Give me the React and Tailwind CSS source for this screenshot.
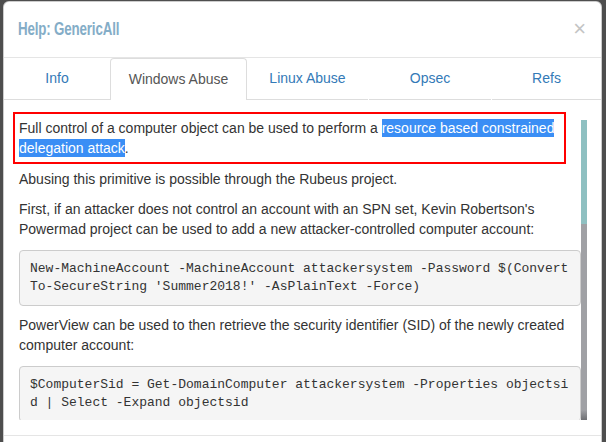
export default function App() {
  const tabInactive =
    "h-full flex items-center justify-center border-b border-[#dddddd] text-[#337ab7]";
  return (
    <div className="w-[606px] h-[442px] overflow-hidden bg-[#4e4e4e] pl-[3px] pt-[1px] font-['Liberation_Sans',Arial,sans-serif] text-[14px] text-[#333333]">
      <div className="w-[599px] h-[470px] bg-white rounded-[6px] border border-black/20 flex flex-col">
        {/* header */}
        <div className="h-[56px] shrink-0 border-b border-[#e5e5e5] flex items-center justify-between pl-[14px] pr-[14px]">
          <div className="inline-block origin-left scale-x-[0.74] text-[18px] font-bold text-[#84adc7] font-['Liberation_Sans',sans-serif] tracking-[-0.2px]">
            Help: GenericAll
          </div>
          <div className="text-[22px] font-normal leading-none text-[#c4c4c4] pb-[2px] pr-[1px]">×</div>
        </div>
        {/* tabs */}
        <div className="h-[42px] shrink-0 flex">
          <div className={`w-[106px] ${tabInactive}`}>Info</div>
          <div className="w-[137px] h-full flex items-center justify-center border border-[#dddddd] border-b-0 rounded-t-[4px] text-[#555555] bg-white">
            Windows Abuse
          </div>
          <div className={`w-[121px] ${tabInactive}`}>Linux Abuse</div>
          <div className="w-[1px] h-full" />
          <div className={`w-[122px] ${tabInactive}`}>Opsec</div>
          <div className="w-[1px] h-full" />
          <div className={`flex-1 ${tabInactive}`}>Refs</div>
        </div>
        {/* body */}
        <div className="flex shrink-0 h-[320px]">
          <div className="w-[577px] h-full overflow-hidden pl-[15px] leading-[20px]">
            <div className="mt-[12px] -ml-[6px] w-[553px] border-2 border-[#ff0000] p-[4px]">
              <p>
                Full control of a computer object can be used to perform a{" "}
                <span className="bg-[#3a8ef5] text-white py-[1px]">
                  resource based constrained delegation attack
                </span>
                .
              </p>
            </div>
            <p className="mt-[5px] mb-[10px]">
              Abusing this primitive is possible through the Rubeus project.
            </p>
            <p className="mb-[11px]">
              First, if an attacker does not control an account with an SPN set, Kevin
              Robertson's Powermad project can be used to add a new attacker-controlled
              computer account:
            </p>
            <pre className="border border-[#cccccc] rounded-[4px] bg-[#f5f5f5] px-[10px] py-[9px] text-[13px] leading-[18px] text-[#333333] whitespace-pre font-['Liberation_Mono',monospace] mb-[9px]">
              {"New-MachineAccount -MachineAccount attackersystem -Password $(Convert\nTo-SecureString 'Summer2018!' -AsPlainText -Force)"}
            </pre>
            <p className="mb-[11px]">
              PowerView can be used to then retrieve the security identifier (SID) of the
              newly created computer account:
            </p>
            <pre className="border border-[#cccccc] rounded-[4px] bg-[#f5f5f5] px-[10px] py-[9px] text-[13px] leading-[18px] text-[#333333] whitespace-pre font-['Liberation_Mono',monospace]">
              {"$ComputerSid = Get-DomainComputer attackersystem -Properties objectsi\nd | Select -Expand objectsid"}
            </pre>
          </div>
          <div className="w-[6px] mt-[20px] h-[300px] flex flex-col">
            <div className="h-[104px] bg-[#8fc0c1]" />
            <div className="flex-1 bg-[#a0a1a5] flex flex-col">
              <div className="mt-auto h-[10px] bg-gradient-to-b from-[#a0a1a5] to-[#6f7074]" />
            </div>
          </div>
        </div>
        <div className="h-[15px] shrink-0" />
        <div className="flex-1 border-t border-[#e5e5e5]" />
      </div>
    </div>
  );
}
